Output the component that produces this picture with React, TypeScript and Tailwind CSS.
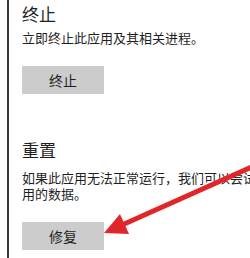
import React from 'react';

const font = { fontFamily: '"Noto Sans CJK SC", "Noto Sans", sans-serif' };

export default function App() {
  return (
    <div className="relative w-[250px] h-[258px] overflow-hidden bg-white flex text-[#1f1f1f]" style={font}>
      {/* Left window edge */}
      <div className="w-[7px] shrink-0" />
      <div className="w-[2px] shrink-0 bg-[#3a3a3a]" />

      <div className="flex flex-col pl-[13px] pt-[2px]">
        {/* Terminate */}
        <h2 className="text-[17px] leading-[24px]">终止</h2>
        <p className="mt-[2px] text-[13px] leading-[20px] whitespace-nowrap">立即终止此应用及其相关进程。</p>
        <button className="mt-[18px] w-[82px] h-[28px] bg-[#cccccc] text-[14px] leading-none">终止</button>

        {/* Reset */}
        <h2 className="mt-[44px] text-[17px] leading-[24px]">重置</h2>
        <p className="mt-[8px] text-[13px] leading-[16px] whitespace-nowrap">
          如果此应用无法正常运行，我们可以尝试进行修复。这不会影响应
          <br />
          用的数据。
        </p>
        <button className="mt-[20px] w-[82px] h-[28px] bg-[#cccccc] text-[14px] leading-none">修复</button>
      </div>

      {/* Red annotation arrow */}
      <svg className="absolute inset-0 pointer-events-none" width="250" height="258" viewBox="0 0 250 258">
        <line x1="122" y1="225" x2="256" y2="165" stroke="#e1262b" strokeWidth="5" strokeLinecap="round" />
        <polygon points="104,233 120,214 129,234" fill="#e1262b" />
      </svg>
    </div>
  );
}
